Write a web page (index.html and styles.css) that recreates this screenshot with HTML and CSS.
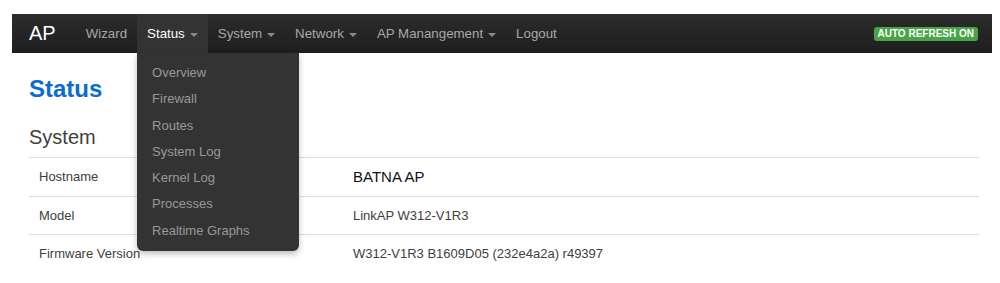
FILE: index.html
```html
<!DOCTYPE html>
<html>
<head>
<meta charset="utf-8">
<link rel="stylesheet" href="styles.css">
</head>
<body>
<div class="navbar">
  <a class="brand">AP</a>
  <ul class="nav">
    <li><a>Wizard</a></li>
    <li class="open"><a class="active">Status <span class="caret"></span></a>
      <ul class="dropdown">
        <li>Overview</li>
        <li>Firewall</li>
        <li>Routes</li>
        <li>System Log</li>
        <li>Kernel Log</li>
        <li>Processes</li>
        <li>Realtime Graphs</li>
      </ul>
    </li>
    <li><a>System <span class="caret"></span></a></li>
    <li><a>Network <span class="caret"></span></a></li>
    <li><a>AP Manangement <span class="caret"></span></a></li>
    <li><a>Logout</a></li>
  </ul>
  <span class="badge">AUTO REFRESH ON</span>
</div>
<div class="content">
  <h2 class="title">Status</h2>
  <h3 class="section">System</h3>
  <div class="table">
    <div class="row"><div class="label">Hostname</div><div class="value big">BATNA AP</div></div>
    <div class="row"><div class="label">Model</div><div class="value">LinkAP W312-V1R3</div></div>
    <div class="row last"><div class="label">Firmware Version</div><div class="value">W312-V1R3 B1609D05 (232e4a2a) r49397</div></div>
  </div>
</div>
</body>
</html>
```
FILE: styles.css
```css
* { box-sizing: border-box; }
body { margin: 0; background: #fff; font-family: "Liberation Sans", Arial, sans-serif; color: #404040; }
.navbar {
  margin: 14px 8px 0 12px;
  height: 39px;
  background: linear-gradient(#2c2c2c, #1e1e1e);
  display: flex;
  align-items: stretch;
  position: relative;
  z-index: 2;
}
.brand { display: flex; align-items: center; padding: 0 20px 0 17px; color: #fff; font-size: 20px; }
.nav { list-style: none; margin: 0; padding: 0; display: flex; }
.nav > li { position: relative; display: flex; }
.nav > li > a { display: flex; align-items: center; padding: 0 10px; font-size: 13.3px; color: #a8a8a8; }
.nav > li > a.active { background: #333; color: #fff; }
.caret { display: inline-block; width: 0; height: 0; margin-left: 5px; border-left: 4px solid transparent; border-right: 4px solid transparent; border-top: 4px solid #8a8a8a; margin-top: 2px; }
.dropdown {
  position: absolute; left: 0; top: 100%;
  width: 162px; margin: 0; padding: 7px 0;
  list-style: none;
  background: #333;
  border-radius: 0 0 6px 6px;
  box-shadow: 0 3px 6px rgba(0,0,0,0.25);
}
.dropdown li { height: 26.3px; line-height: 26px; padding: 0 15px; font-size: 13px; color: #999; }
.badge {
  margin: auto 14px auto auto;
  background: #46a546; color: #fff;
  font-size: 10px; font-weight: bold;
  padding: 1px 4px; line-height: 12px; border-radius: 3px;
}
.content { margin-left: 29px; width: 950px; }
.title { margin: 21px 0 0; font-size: 24px; line-height: 30px; font-weight: bold; color: #0b6ccf; }
.section { margin: 20px 0 0; font-size: 20px; line-height: 26px; font-weight: normal; color: #404040; }
.table { margin-top: 7px; }
.row { display: flex; height: 38.5px; align-items: center; border-top: 1px solid #ddd; font-size: 13px; }
.label { width: 324px; padding-left: 10px; color: #404040; }
.value { color: #404040; }
.value.big { font-size: 15px; color: #111; }
```
